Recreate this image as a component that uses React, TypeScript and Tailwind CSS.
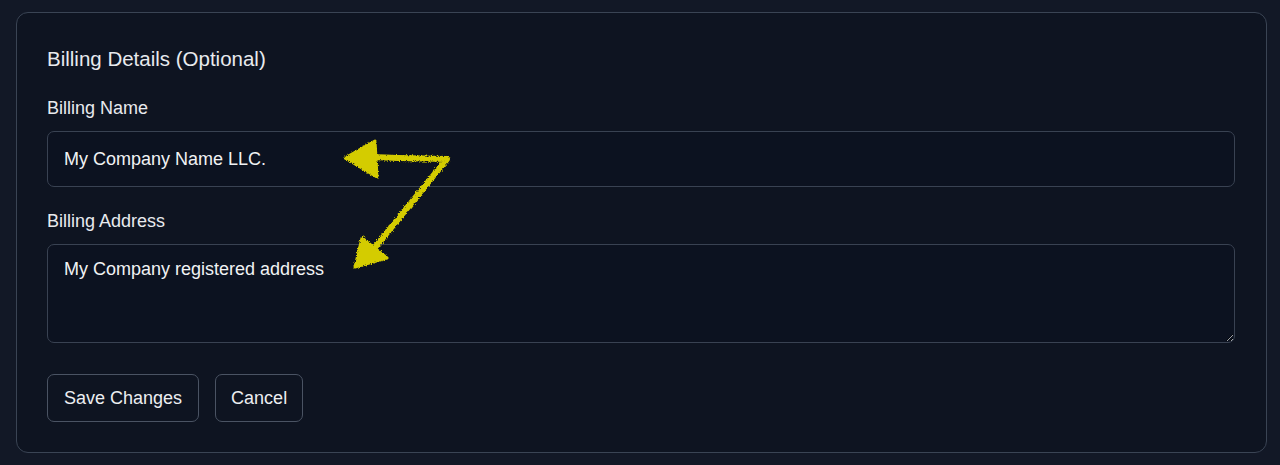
import React from "react";

function ChalkArrows() {
  return (
    <svg
      className="pointer-events-none absolute left-0 top-0"
      width="1280"
      height="465"
      viewBox="0 0 1280 465"
    >
      <defs>
        <filter id="chalk" x="-10%" y="-10%" width="120%" height="120%">
          <feTurbulence type="fractalNoise" baseFrequency="1.2" numOctaves="2" seed="3" result="noise" />
          <feDisplacementMap in="SourceGraphic" in2="noise" scale="4" xChannelSelector="R" yChannelSelector="G" />
        </filter>
      </defs>
      <g filter="url(#chalk)" fill="#d4cc06" stroke="#d4cc06" strokeLinejoin="round" strokeLinecap="round">
        <path d="M372 157 L398 158 L447 159 L372 251" fill="none" strokeWidth="6" />
        <path d="M345 158 L375 141 L377 177 Z" strokeWidth="3" />
        <path d="M355 267 L362 238 L387 258 Z" strokeWidth="3" />
      </g>
    </svg>
  );
}

export default function App() {
  return (
    <div className="relative h-[465px] w-[1280px] overflow-hidden bg-[#121826] pt-[12px] pl-[16px] font-['Liberation_Sans',Arial,sans-serif]">
      <div className="w-[1251px] rounded-[12px] border border-[#3a4454] bg-[#0e1421] pt-[32px] pb-[30px] pl-[30px] pr-[31px]">
        <h2 className="text-[20.5px] leading-[28px] text-[#e8eaee]">Billing Details (Optional)</h2>
        <label className="mt-[23px] block text-[18px] leading-[24px] text-[#e8eaee]">Billing Name</label>
        <div className="mt-[11px] flex h-[56px] items-center rounded-[7px] border border-[#394252] bg-[#0c1220] px-[16px] text-[18px] text-[#f1f2f4]">
          My Company Name LLC.
        </div>
        <label className="mt-[22px] block text-[18px] leading-[24px] text-[#e8eaee]">Billing Address</label>
        <textarea
          readOnly
          value="My Company registered address"
          className="mt-[11px] block h-[99px] w-full rounded-[7px] border border-[#394252] bg-[#0c1220] px-[16px] pt-[14px] text-[18px] leading-[20px] text-[#f1f2f4] outline-none [color-scheme:dark]"
        />
        <div className="mt-[31px] flex gap-[16px]">
          <button className="h-[48px] rounded-[7px] border border-[#4a5363] bg-transparent px-[16px] text-[18px] text-[#eceef1]">
            Save Changes
          </button>
          <button className="h-[48px] rounded-[7px] border border-[#4a5363] bg-transparent px-[15px] text-[18px] text-[#eceef1]">
            Cancel
          </button>
        </div>
      </div>
      <ChalkArrows />
    </div>
  );
}
